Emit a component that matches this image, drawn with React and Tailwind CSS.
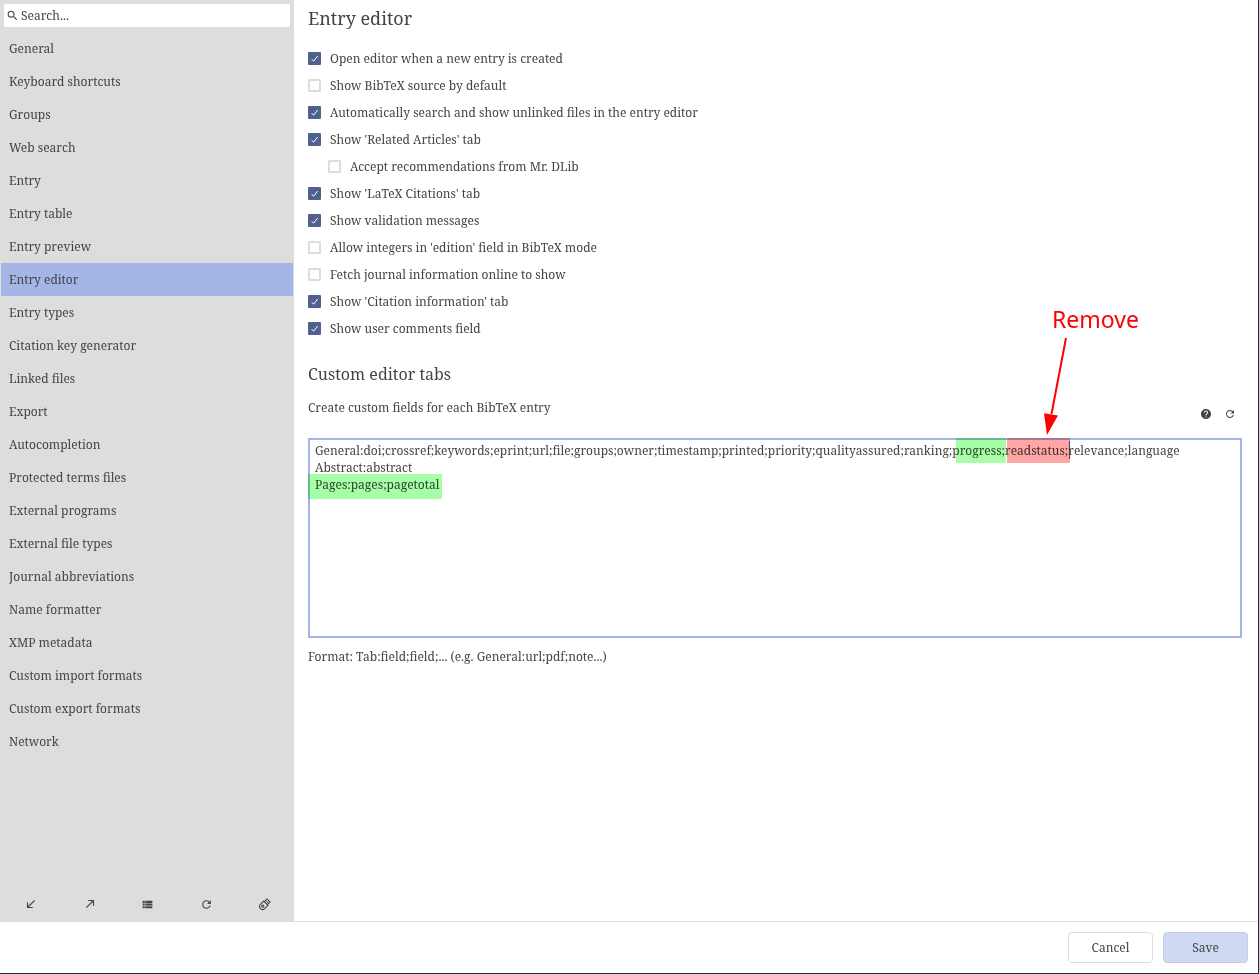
import { MdHelp, MdRefresh, MdSearch, MdViewList } from 'react-icons/md';

const pages = [
  'General', 'Keyboard shortcuts', 'Groups', 'Web search', 'Entry', 'Entry table',
  'Entry preview', 'Entry editor', 'Entry types', 'Citation key generator',
  'Linked files', 'Export', 'Autocompletion', 'Protected terms files',
  'External programs', 'External file types', 'Journal abbreviations',
  'Name formatter', 'XMP metadata', 'Custom import formats',
  'Custom export formats', 'Network',
];

const options = [
  { label: 'Open editor when a new entry is created', checked: true },
  { label: 'Show BibTeX source by default', checked: false },
  { label: 'Automatically search and show unlinked files in the entry editor', checked: true },
  { label: "Show 'Related Articles' tab", checked: true },
  { label: 'Accept recommendations from Mr. DLib', checked: false, nested: true },
  { label: "Show 'LaTeX Citations' tab", checked: true },
  { label: 'Show validation messages', checked: true },
  { label: "Allow integers in 'edition' field in BibTeX mode", checked: false },
  { label: 'Fetch journal information online to show', checked: false },
  { label: "Show 'Citation information' tab", checked: true },
  { label: 'Show user comments field', checked: true },
];

const tabsText = `General:doi;crossref;keywords;eprint;url;file;groups;owner;timestamp;printed;priority;qualityassured;ranking;progress;readstatus;relevance;language
Abstract:abstract
Pages:pages;pagetotal`;

function ArrowDownLeft() {
  return (
    <svg viewBox="0 0 24 24" className="size-[14px]" fill="currentColor">
      <path d="M19 6.4 17.6 5 7 15.6V9H5v10h10v-2H8.4z" />
    </svg>
  );
}

function ArrowUpRight() {
  return (
    <svg viewBox="0 0 24 24" className="size-[14px]" fill="currentColor">
      <path d="M5 17.6 6.4 19 17 8.4V15h2V5H9v2h6.6z" />
    </svg>
  );
}

function MemoryStick() {
  return (
    <svg viewBox="0 0 24 24" className="size-[13px]" fill="none" stroke="currentColor" strokeWidth="2">
      <g transform="rotate(45 12 12)">
        <path d="M6.500 8.500h11V17a5.500 5.500 0 0 1-11 0z" />
        <path d="M8 8.500V1.500h8v7" />
        <path d="M10.500 4v2M13.500 4v2" />
        <circle cx="12" cy="16.500" r="2" />
      </g>
    </svg>
  );
}

function Option({ label, checked, nested }) {
  return (
    <label className={`flex h-[27px] items-center gap-[9px] ${nested ? 'ml-5' : ''}`}>
      <span className="grid size-[13px] shrink-0">
        <input
          type="checkbox"
          defaultChecked={checked}
          className="peer col-start-1 row-start-1 size-[13px] appearance-none rounded-[1px] border-2 border-[#dddddd] bg-white checked:border-[#50618f] checked:bg-[#50618f]"
        />
        <svg
          viewBox="0 0 13 13"
          className="pointer-events-none invisible col-start-1 row-start-1 size-[13px] peer-checked:visible"
          fill="none"
          stroke="#ffffff"
          strokeWidth="1"
        >
          <path d="M3.700 7.200 5.600 9.200 9.700 4" />
        </svg>
      </span>
      <span>{label}</span>
    </label>
  );
}

export default function App() {
  return (
    <div className="flex min-h-screen flex-col border-r border-b border-[#0d3540] bg-white font-['Noto_Serif','DejaVu_Serif_Condensed','DejaVu_Serif',serif] text-[12px] leading-[17px] text-[#444444]">
      <div className="flex grow">
        <aside className="flex w-[294px] shrink-0 flex-col bg-[#dddddd]">
          <label className="m-1 flex h-[23px] items-center gap-[2px] rounded-[2px] bg-white px-[2px]">
            <MdSearch className="size-[13px] shrink-0" />
            <input
              type="text"
              aria-label="Search"
              placeholder="Search..."
              className="min-w-0 grow outline-none placeholder:text-[#444444]"
            />
          </label>
          <nav className="mt-px flex flex-col px-px">
            {pages.map((page) => (
              <a
                key={page}
                href="#"
                aria-current={page === 'Entry editor' ? 'page' : undefined}
                className="flex h-[33px] items-center px-2 aria-[current=page]:bg-[#a4b6e6]"
              >
                {page}
              </a>
            ))}
          </nav>
          <div className="mt-auto flex h-9 items-start justify-around pl-[2px]">
            <button type="button" aria-label="Import preferences" className="grid size-9 place-items-center"><ArrowDownLeft /></button>
            <button type="button" aria-label="Export preferences" className="grid size-9 place-items-center"><ArrowUpRight /></button>
            <button type="button" aria-label="Show preferences" className="grid size-9 place-items-center"><MdViewList className="size-[13px]" /></button>
            <button type="button" aria-label="Reset preferences" className="grid size-9 place-items-center"><MdRefresh className="size-[13px]" /></button>
            <button type="button" aria-label="Memory stick mode" className="grid size-9 place-items-center"><MemoryStick /></button>
          </div>
        </aside>

        <main className="min-w-0 grow border-b border-[#dddddd] pt-[6px] pr-4 pl-[14px]">
          <h1 className="text-[18px] leading-6">Entry editor</h1>
          <div className="mt-[15px] flex flex-col items-start">
            {options.map((option) => (
              <Option key={option.label} {...option} />
            ))}
          </div>

          <h2 className="mt-5 text-[16px] leading-6">Custom editor tabs</h2>
          <div className="mt-3 flex justify-between">
            <label htmlFor="custom-tabs" className="leading-[19px]">Create custom fields for each BibTeX entry</label>
            <div className="flex pt-1">
              <button type="button" aria-label="Help" className="grid size-6 place-items-center"><MdHelp className="size-3" /></button>
              <button type="button" aria-label="Reset to default" className="grid size-6 place-items-center"><MdRefresh className="size-3" /></button>
            </div>
          </div>

          <div className="relative mt-3">
            <textarea
              id="custom-tabs"
              spellCheck={false}
              defaultValue={tabsText}
              className="block h-[200px] w-full resize-none border-2 border-[#a4b6e6] bg-white px-[5px] pt-[2px] whitespace-pre outline-none"
            />
            <div className="pointer-events-none absolute top-0 left-[648px] h-[25px] w-[50px] bg-[#a6ffa6] mix-blend-multiply" />
            <div className="pointer-events-none absolute top-0 left-[699px] h-[25px] w-[63px] bg-[#ffa6a6] mix-blend-multiply" />
            <div className="pointer-events-none absolute top-[3px] left-[761px] h-[18px] w-px bg-[#444444]" />
            <div className="pointer-events-none absolute top-[36px] left-0 h-[25px] w-[134px] bg-[#a6ffa6] mix-blend-multiply" />
            <div className="pointer-events-none absolute -top-[133px] left-[744px] font-['Noto_Sans',sans-serif] text-[23px] leading-[28px] text-[#ff0000]">Remove</div>
            <svg viewBox="0 0 50 100" className="pointer-events-none absolute -top-[102px] left-[724px] h-[100px] w-[50px]" fill="#ff0000">
              <path d="M34 2 19.500 78" stroke="#ff0000" strokeWidth="2" />
              <path d="M12 77.300 26 79.500 15 99z" />
            </svg>
          </div>
          <p className="mt-[10px]">Format: Tab:field;field;... (e.g. General:url;pdf;note...)</p>
        </main>
      </div>

      <footer className="flex h-[51px] shrink-0 items-center justify-end gap-[10px] pr-[10px]">
        <button type="button" className="h-[31px] w-[85px] rounded-[4px] border border-[#dddddd] bg-white">Cancel</button>
        <button type="button" className="h-[31px] w-[85px] rounded-[4px] border border-[#c3cdea] bg-[#cfd9f2]">Save</button>
      </footer>
    </div>
  );
}
